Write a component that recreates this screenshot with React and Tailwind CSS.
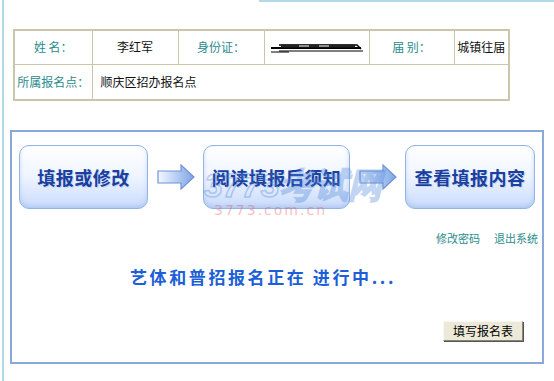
import React from "react";

const cjk = { fontFamily: '"SimSun", "Noto Sans CJK SC", sans-serif' };

const Arrow = () => (
  <svg width="38" height="26" viewBox="0 0 38 26" className="shrink-0">
    <defs>
      <linearGradient id="ag" x1="0" y1="0" x2="1" y2="0">
        <stop offset="0" stopColor="#f4f8ff" />
        <stop offset="1" stopColor="#7ea4e6" />
      </linearGradient>
    </defs>
    <path
      d="M1 7 H24 V1 L37 13 L24 25 V19 H1 Z"
      fill="url(#ag)"
      stroke="#6f93d6"
      strokeWidth="1.2"
    />
  </svg>
);

const StepBox = ({ text, w }) => (
  <div
    className={`${w} h-[64px] shrink-0 rounded-[10px] border border-[#93b2e6] bg-gradient-to-b from-white via-[#eef4ff] to-[#c9dbfa] flex items-center justify-center shadow-[inset_0_-2px_4px_rgba(120,160,230,0.35)]`}
  >
    <span
      className="text-[18px] font-bold text-[#1b3f9e] tracking-[0.5px]"
      style={{ fontFamily: '"Noto Sans CJK SC", serif', textShadow: "1px 1px 0 #c5d6f5" }}
    >
      {text}
    </span>
  </div>
);

const labelCls = "text-[#2a8c8c] text-center";

export default function App() {
  return (
    <div className="w-[554px] h-[381px] bg-white overflow-hidden" style={cjk}>
      <div className="h-full ml-[2px] border-l-2 border-[#b3d8e6] flex flex-col">
        <div className="ml-[255px] h-[2px] bg-[#b3d8e6]" />

        {/* info table */}
        <table className="mt-[27px] ml-[9px] w-[497px] border-collapse border-2 border-[#cdc4ac] text-[12px] text-[#111]">
          <tbody>
            <tr className="h-[34px]">
              <td className={`${labelCls} w-[78px] border border-[#cdc4ac]`}>姓 名：</td>
              <td className="w-[86px] border border-[#cdc4ac] text-center">李红军</td>
              <td className={`${labelCls} w-[86px] border border-[#cdc4ac]`}>身份证：</td>
              <td className="w-[105px] border border-[#cdc4ac]">
                <div className="flex justify-center">
                  <svg width="96" height="12" viewBox="0 0 96 12">
                    <path d="M2 7 H92" stroke="#000" strokeWidth="2" />
                    <path d="M10 4 H88 L92 8" stroke="#000" strokeWidth="1.5" fill="none" />
                    <path d="M12 5 H86" stroke="#222" strokeWidth="3" />
                    <path d="M10 10 H94" stroke="#000" strokeWidth="1" />
                    <path d="M2 11 H20" stroke="#000" strokeWidth="1" />
                    <path d="M30 5 H40 M50 5 H60" stroke="#fff" strokeWidth="1" />
                  </svg>
                </div>
              </td>
              <td className={`${labelCls} w-[85px] border border-[#cdc4ac]`}>届 别：</td>
              <td className="border border-[#cdc4ac] text-center">城镇往届</td>
            </tr>
            <tr className="h-[36px]">
              <td className={`${labelCls} border border-[#cdc4ac]`}>所属报名点：</td>
              <td colSpan={5} className="border border-[#cdc4ac] pl-[8px]">
                顺庆区招办报名点
              </td>
            </tr>
          </tbody>
        </table>

        {/* main panel */}
        <div className="relative mt-[29px] ml-[6px] w-[534px] h-[234px] border-2 border-[#8aa8d8] flex flex-col">
          <div className="mt-[13px] ml-[7px] flex items-center">
            <StepBox text="填报或修改" w="w-[129px]" />
            <div className="ml-[9px] mr-[8px] flex"><Arrow /></div>
            <StepBox text="阅读填报后须知" w="w-[147px]" />
            <div className="ml-[9px] mr-[8px] flex"><Arrow /></div>
            <StepBox text="查看填报内容" w="w-[130px]" />
          </div>

          <div className="mt-[21px] mr-[4px] flex justify-end gap-[14px] text-[11px] text-[#2a8c8c]">
            <span>修改密码</span>
            <span>退出系统</span>
          </div>

          <div
            className="mt-[17px] ml-[118px] text-[17px] font-bold text-[#1c5fd6] tracking-[2.6px]"
            style={{ fontFamily: '"Noto Sans CJK SC", serif' }}
          >
            艺体和普招报名正在 进行中...
          </div>

          <div className="mt-[32px] mr-[19px] flex justify-end">
            <button
              className="w-[80px] h-[20px] bg-[#ece9d8] border border-[#f8f8f0] border-r-[#8a8678] border-b-[#8a8678] text-[12px] text-[#000] shadow-[1px_1px_0_#555]"
              style={cjk}
            >
              填写报名表
            </button>
          </div>

          {/* watermark */}
          <div className="absolute left-[192px] top-[36px] flex flex-col items-start pointer-events-none opacity-35">
            <span
              className="italic font-bold text-[34px] leading-[34px] text-transparent"
              style={{ WebkitTextStroke: "1.5px #4f86d8", fontFamily: '"Liberation Sans", sans-serif' }}
            >
              3773考试网
            </span>
            <span
              className="ml-[10px] text-[14px] leading-[16px] tracking-[2px] text-[#e05050]"
              style={{ fontFamily: '"DejaVu Sans", sans-serif' }}
            >
              3773.com.cn
            </span>
          </div>
        </div>
      </div>
    </div>
  );
}
